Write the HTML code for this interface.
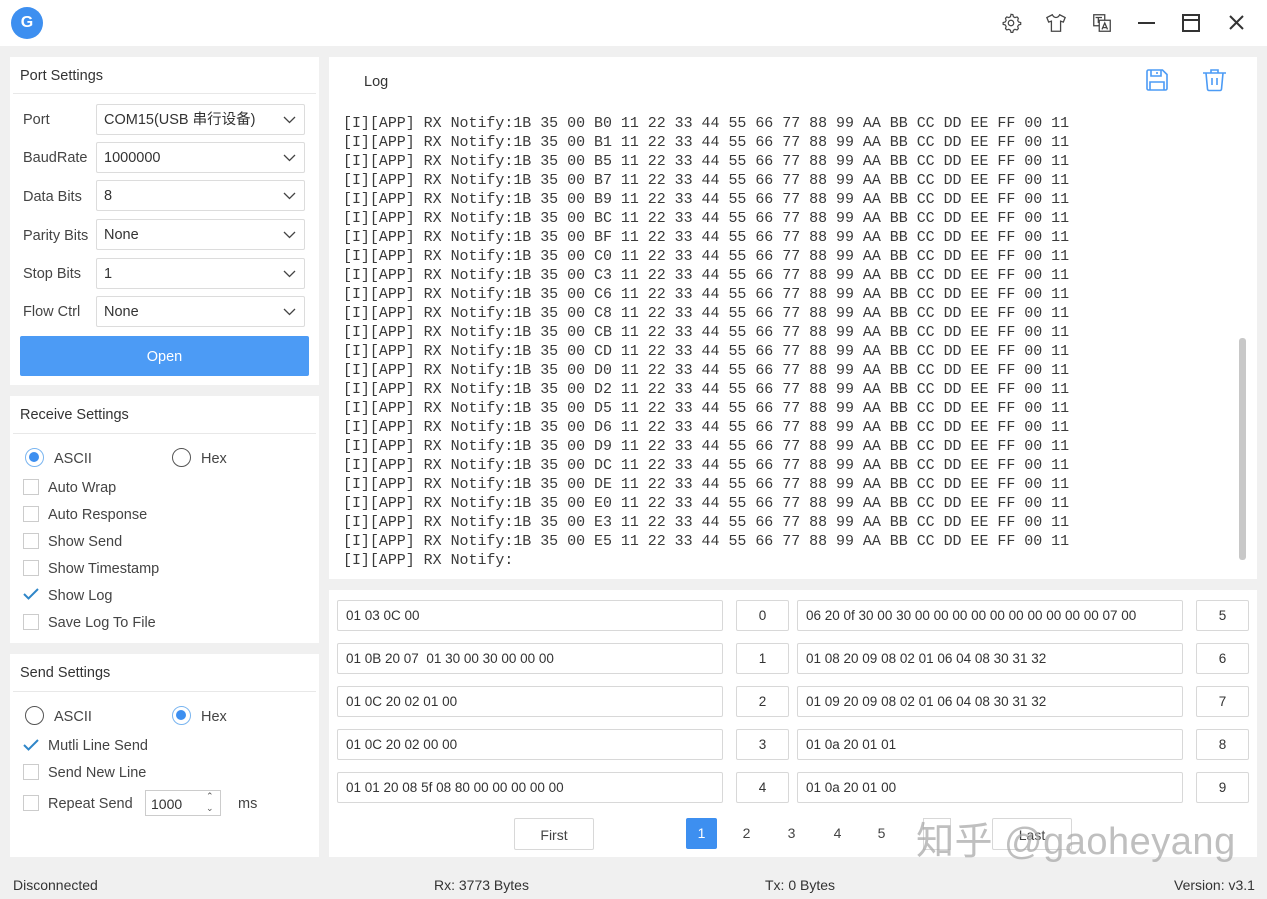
<!DOCTYPE html>
<html><head><meta charset="utf-8"><style>
*{box-sizing:border-box;margin:0;padding:0}
body{width:1267px;height:899px;background:#f0f0f0;font-family:"Liberation Sans","Noto Sans CJK SC",sans-serif;font-size:14px;color:#333;position:relative;overflow:hidden}
.a{position:absolute}
.panel{position:absolute;background:#fff}
.ph{position:absolute;left:10px;font-size:14.5px;color:#333}
.hr{position:absolute;left:0;right:0;height:1px;background:#e8e8e8}
.sel{position:absolute;left:86px;width:209px;height:31px;border:1px solid #dcdcdc;border-radius:2px;padding-left:7px;line-height:31px;font-size:14.5px;color:#333}
.sel svg{position:absolute;right:8px;top:11px}
.lbl{position:absolute;left:13px;font-size:14.5px;color:#444}
.cb{position:absolute;left:13px;width:16px;height:16px;border:1px solid #ccc;background:#fff}
.ck{position:absolute;left:13px}
.ct{position:absolute;left:38px;font-size:14.5px;color:#444}
.rad{position:absolute;width:19px;height:19px;border-radius:50%;border:1.5px solid #555}
.rad.on{border:1.5px solid #7ab5f0}
.rad.on::after{content:"";position:absolute;left:3px;top:3px;width:10px;height:10px;border-radius:50%;background:#3d8ff0}
.log{position:absolute;left:14px;top:58px;font-family:"Liberation Mono",monospace;font-size:14.95px;line-height:19px;color:#3a3a3a;white-space:pre}
.in{position:absolute;height:31px;border:1px solid #d8d8d8;border-radius:2px;background:#fff;line-height:29px;padding-left:8px;font-size:13.5px;color:#333}
.nb{position:absolute;height:31px;border:1px solid #d8d8d8;border-radius:2px;background:#fff;line-height:29px;text-align:center;font-size:13.5px;color:#333;width:53px}
.pg{position:absolute;top:261px;font-size:14px;color:#444;width:31px;height:31px;line-height:31px;text-align:center}
.st{position:absolute;top:877px;font-size:14px;color:#333}
</style></head><body>
<div class="a" style="left:0;top:0;width:1267px;height:46px;background:#fff"></div>
<div class="a" style="left:11px;top:7px;width:32px;height:32px;border-radius:50%;background:#3d8ff0;color:#fff;font-weight:bold;font-size:16px;text-align:center;line-height:32px">G</div>
<svg class="a" style="left:1000px;top:12px" width="22" height="22" viewBox="0 0 24 24" fill="none" stroke="#444" stroke-width="1.3"><circle cx="12" cy="12" r="3"/><path d="M12 2.5l2 .3.6 2.3 1.7 1 2.3-.7 1.4 1.5-.7 2.3 1 1.7 2.3.6v2l-2.3.6-1 1.7.7 2.3-1.4 1.5-2.3-.7-1.7 1-.6 2.3h-2l-.6-2.3-1.7-1-2.3.7-1.4-1.5.7-2.3-1-1.7-2.3-.6v-2l2.3-.6 1-1.7-.7-2.3 1.4-1.5 2.3.7 1.7-1 .6-2.3z"/></svg>
<svg class="a" style="left:1045px;top:12px" width="22" height="22" viewBox="0 0 24 24" fill="none" stroke="#444" stroke-width="1.4"><path d="M8 3l-6 3 2 5 3-1v11h10V10l3 1 2-5-6-3c-1 2-2.5 3-4 3s-3-1-4-3z"/></svg>
<svg class="a" style="left:1091px;top:12px" width="22" height="22" viewBox="0 0 24 24" fill="none" stroke="#444" stroke-width="1.4"><rect x="3" y="3" width="12" height="12"/><rect x="9" y="9" width="12" height="12" fill="#fff"/><path d="M12 19l3-7 3 7M13 17h4M5 6h7M8 6v6"/></svg>
<div class="a" style="left:1138px;top:22px;width:17px;height:2px;background:#333"></div>
<div class="a" style="left:1182px;top:14px;width:18px;height:18px;border:2px solid #333"></div>
<div class="a" style="left:1182px;top:19px;width:18px;height:2px;background:#333"></div>
<svg class="a" style="left:1228px;top:14px" width="17" height="17" viewBox="0 0 17 17" stroke="#333" stroke-width="2"><path d="M2 2l13 13M15 2L2 15"/></svg>

<div class="panel" style="left:10px;top:57px;width:309px;height:328px">
<div class="ph" style="top:11px">Port Settings</div>
<div class="hr" style="top:36px;left:3px;right:3px"></div>
<div class="lbl" style="top:55px">Port</div><div class="sel" style="top:47px">COM15(USB 串行设备)<svg width="13" height="8" viewBox="0 0 13 8" fill="none" stroke="#444" stroke-width="1.3"><path d="M1 1l5.5 5.5L12 1"/></svg></div>
<div class="lbl" style="top:93px">BaudRate</div><div class="sel" style="top:85px">1000000<svg width="13" height="8" viewBox="0 0 13 8" fill="none" stroke="#444" stroke-width="1.3"><path d="M1 1l5.5 5.5L12 1"/></svg></div>
<div class="lbl" style="top:132px">Data Bits</div><div class="sel" style="top:123px">8<svg width="13" height="8" viewBox="0 0 13 8" fill="none" stroke="#444" stroke-width="1.3"><path d="M1 1l5.5 5.5L12 1"/></svg></div>
<div class="lbl" style="top:171px">Parity Bits</div><div class="sel" style="top:162px">None<svg width="13" height="8" viewBox="0 0 13 8" fill="none" stroke="#444" stroke-width="1.3"><path d="M1 1l5.5 5.5L12 1"/></svg></div>
<div class="lbl" style="top:209px">Stop Bits</div><div class="sel" style="top:201px">1<svg width="13" height="8" viewBox="0 0 13 8" fill="none" stroke="#444" stroke-width="1.3"><path d="M1 1l5.5 5.5L12 1"/></svg></div>
<div class="lbl" style="top:247px">Flow Ctrl</div><div class="sel" style="top:239px">None<svg width="13" height="8" viewBox="0 0 13 8" fill="none" stroke="#444" stroke-width="1.3"><path d="M1 1l5.5 5.5L12 1"/></svg></div>
<div class="a" style="left:10px;top:279px;width:289px;height:40px;background:#4c9bf5;border-radius:2px;color:#fff;text-align:center;line-height:42px;font-size:14.5px">Open</div>
</div>

<div class="panel" style="left:10px;top:396px;width:309px;height:247px">
<div class="ph" style="top:11px">Receive Settings</div>
<div class="hr" style="top:37px;left:3px;right:3px"></div>
<div class="rad on" style="left:15px;top:52px"></div><div class="a" style="left:44px;top:55px;font-size:14.5px;color:#444">ASCII</div>
<div class="rad" style="left:162px;top:52px"></div><div class="a" style="left:191px;top:55px;font-size:14.5px;color:#444">Hex</div>
<div class="cb" style="top:83px"></div><div class="ct" style="top:84px">Auto Wrap</div>
<div class="cb" style="top:110px"></div><div class="ct" style="top:111px">Auto Response</div>
<div class="cb" style="top:137px"></div><div class="ct" style="top:138px">Show Send</div>
<div class="cb" style="top:164px"></div><div class="ct" style="top:165px">Show Timestamp</div>
<svg class="ck" style="top:192px" width="16" height="12" viewBox="0 0 16 12" fill="none" stroke="#2f86c8" stroke-width="2"><path d="M1 6l4.5 4.5L15 1"/></svg><div class="ct" style="top:192px">Show Log</div>
<div class="cb" style="top:218px"></div><div class="ct" style="top:219px">Save Log To File</div>
</div>

<div class="panel" style="left:10px;top:654px;width:309px;height:203px">
<div class="ph" style="top:11px">Send Settings</div>
<div class="hr" style="top:37px;left:3px;right:3px"></div>
<div class="rad" style="left:15px;top:52px"></div><div class="a" style="left:44px;top:55px;font-size:14.5px;color:#444">ASCII</div>
<div class="rad on" style="left:162px;top:52px"></div><div class="a" style="left:191px;top:55px;font-size:14.5px;color:#444">Hex</div>
<svg class="ck" style="top:85px" width="16" height="12" viewBox="0 0 16 12" fill="none" stroke="#2f86c8" stroke-width="2"><path d="M1 6l4.5 4.5L15 1"/></svg><div class="ct" style="top:84px">Mutli Line Send</div>
<div class="cb" style="top:110px"></div><div class="ct" style="top:111px">Send New Line</div>
<div class="cb" style="top:141px"></div><div class="ct" style="top:142px">Repeat Send</div>
<div class="a" style="left:135px;top:136px;width:76px;height:26px;border:1px solid #ccc;font-size:14px;line-height:26px;padding-left:5px">1000</div>
<div class="a" style="left:196px;top:136px;font-size:9px;color:#555;line-height:12px">&#8963;<br>&#8964;</div>
<div class="a" style="left:228px;top:142px;font-size:14.5px;color:#444">ms</div>
</div>

<div class="panel" style="left:329px;top:57px;width:928px;height:522px">
<div class="a" style="left:35px;top:17px;font-size:14.5px;color:#333">Log</div>
<svg class="a" style="left:816px;top:11px" width="24" height="24" viewBox="0 0 24 24" fill="none" stroke="#4c9bf5" stroke-width="1.6"><path d="M2 3.5A1.5 1.5 0 013.5 2h14L22 6.5v14a1.5 1.5 0 01-1.5 1.5h-17A1.5 1.5 0 012 20.5z"/><path d="M6 2v6h10V2M12 4v2M5 22v-8h14v8"/></svg>
<svg class="a" style="left:873px;top:11px" width="25" height="24" viewBox="0 0 25 24" fill="none" stroke="#4c9bf5" stroke-width="1.6"><path d="M1 5h23M9 5V2h7v3M4 5l1.5 16a1.5 1.5 0 001.5 1.5h11a1.5 1.5 0 001.5-1.5L21 5M10 10v7M15 10v7"/></svg>
<div class="log">[I][APP] RX Notify:1B 35 00 B0 11 22 33 44 55 66 77 88 99 AA BB CC DD EE FF 00 11
[I][APP] RX Notify:1B 35 00 B1 11 22 33 44 55 66 77 88 99 AA BB CC DD EE FF 00 11
[I][APP] RX Notify:1B 35 00 B5 11 22 33 44 55 66 77 88 99 AA BB CC DD EE FF 00 11
[I][APP] RX Notify:1B 35 00 B7 11 22 33 44 55 66 77 88 99 AA BB CC DD EE FF 00 11
[I][APP] RX Notify:1B 35 00 B9 11 22 33 44 55 66 77 88 99 AA BB CC DD EE FF 00 11
[I][APP] RX Notify:1B 35 00 BC 11 22 33 44 55 66 77 88 99 AA BB CC DD EE FF 00 11
[I][APP] RX Notify:1B 35 00 BF 11 22 33 44 55 66 77 88 99 AA BB CC DD EE FF 00 11
[I][APP] RX Notify:1B 35 00 C0 11 22 33 44 55 66 77 88 99 AA BB CC DD EE FF 00 11
[I][APP] RX Notify:1B 35 00 C3 11 22 33 44 55 66 77 88 99 AA BB CC DD EE FF 00 11
[I][APP] RX Notify:1B 35 00 C6 11 22 33 44 55 66 77 88 99 AA BB CC DD EE FF 00 11
[I][APP] RX Notify:1B 35 00 C8 11 22 33 44 55 66 77 88 99 AA BB CC DD EE FF 00 11
[I][APP] RX Notify:1B 35 00 CB 11 22 33 44 55 66 77 88 99 AA BB CC DD EE FF 00 11
[I][APP] RX Notify:1B 35 00 CD 11 22 33 44 55 66 77 88 99 AA BB CC DD EE FF 00 11
[I][APP] RX Notify:1B 35 00 D0 11 22 33 44 55 66 77 88 99 AA BB CC DD EE FF 00 11
[I][APP] RX Notify:1B 35 00 D2 11 22 33 44 55 66 77 88 99 AA BB CC DD EE FF 00 11
[I][APP] RX Notify:1B 35 00 D5 11 22 33 44 55 66 77 88 99 AA BB CC DD EE FF 00 11
[I][APP] RX Notify:1B 35 00 D6 11 22 33 44 55 66 77 88 99 AA BB CC DD EE FF 00 11
[I][APP] RX Notify:1B 35 00 D9 11 22 33 44 55 66 77 88 99 AA BB CC DD EE FF 00 11
[I][APP] RX Notify:1B 35 00 DC 11 22 33 44 55 66 77 88 99 AA BB CC DD EE FF 00 11
[I][APP] RX Notify:1B 35 00 DE 11 22 33 44 55 66 77 88 99 AA BB CC DD EE FF 00 11
[I][APP] RX Notify:1B 35 00 E0 11 22 33 44 55 66 77 88 99 AA BB CC DD EE FF 00 11
[I][APP] RX Notify:1B 35 00 E3 11 22 33 44 55 66 77 88 99 AA BB CC DD EE FF 00 11
[I][APP] RX Notify:1B 35 00 E5 11 22 33 44 55 66 77 88 99 AA BB CC DD EE FF 00 11
[I][APP] RX Notify:</div>
<div class="a" style="left:910px;top:281px;width:7px;height:222px;background:#c8c8c8;border-radius:3px"></div>
</div>

<div class="panel" style="left:329px;top:590px;width:928px;height:267px">
<div class="in" style="left:8px;top:10px;width:386px">01 03 0C 00</div><div class="nb" style="left:407px;top:10px">0</div>
<div class="in" style="left:468px;top:10px;width:386px">06 20 0f 30 00 30 00 00 00 00 00 00 00 00 00 00 07 00</div><div class="nb" style="left:867px;top:10px">5</div>
<div class="in" style="left:8px;top:53px;width:386px">01 0B 20 07&nbsp; 01 30 00 30 00 00 00</div><div class="nb" style="left:407px;top:53px">1</div>
<div class="in" style="left:468px;top:53px;width:386px">01 08 20 09 08 02 01 06 04 08 30 31 32</div><div class="nb" style="left:867px;top:53px">6</div>
<div class="in" style="left:8px;top:96px;width:386px">01 0C 20 02 01 00</div><div class="nb" style="left:407px;top:96px">2</div>
<div class="in" style="left:468px;top:96px;width:386px">01 09 20 09 08 02 01 06 04 08 30 31 32</div><div class="nb" style="left:867px;top:96px">7</div>
<div class="in" style="left:8px;top:139px;width:386px">01 0C 20 02 00 00</div><div class="nb" style="left:407px;top:139px">3</div>
<div class="in" style="left:468px;top:139px;width:386px">01 0a 20 01 01</div><div class="nb" style="left:867px;top:139px">8</div>
<div class="in" style="left:8px;top:182px;width:386px">01 01 20 08 5f 08 80 00 00 00 00 00</div><div class="nb" style="left:407px;top:182px">4</div>
<div class="in" style="left:468px;top:182px;width:386px">01 0a 20 01 00</div><div class="nb" style="left:867px;top:182px">9</div>
<div class="a" style="left:185px;top:228px;width:80px;height:32px;border:1px solid #d8d8d8;border-radius:2px;text-align:center;line-height:32px;font-size:14px;color:#444">First</div>
<div class="pg" style="left:357px;top:228px;background:#3d8ff0;color:#fff;border-radius:2px">1</div>
<div class="pg" style="left:402px;top:228px">2</div>
<div class="pg" style="left:447px;top:228px">3</div>
<div class="pg" style="left:493px;top:228px">4</div>
<div class="pg" style="left:537px;top:228px">5</div>
<div class="a" style="left:594px;top:228px;width:28px;height:32px;border:1px solid #d8d8d8"></div>
<div class="a" style="left:663px;top:228px;width:80px;height:32px;border:1px solid #d8d8d8;border-radius:2px;text-align:center;line-height:32px;font-size:14px;color:#444">Last</div>
</div>
<div class="a" style="left:916px;top:817px;font-size:38px;color:rgba(170,170,170,0.75);letter-spacing:0.5px;white-space:nowrap;line-height:50px">知乎 @gaoheyang</div>

<div class="st" style="left:13px">Disconnected</div>
<div class="st" style="left:434px">Rx: 3773 Bytes</div>
<div class="st" style="left:765px">Tx: 0 Bytes</div>
<div class="st" style="left:1174px">Version: v3.1</div>
</body></html>
